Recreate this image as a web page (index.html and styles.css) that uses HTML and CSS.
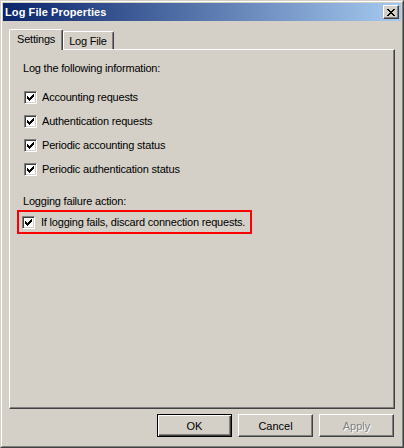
FILE: index.html
```html
<!DOCTYPE html>
<html>
<head>
<meta charset="utf-8">
<link rel="stylesheet" href="styles.css">
</head>
<body>
<div class="window">
  <div class="frame">
    <div class="titlebar">
      <span class="title">Log File Properties</span>
      <button class="close" aria-label="Close">
        <svg width="8" height="7" viewBox="0 0 8 7" shape-rendering="crispEdges">
          <path d="M0 0h2v1h-2zM6 0h2v1h-2zM1 1h2v1h-2zM5 1h2v1h-2zM2 2h4v1h-4zM3 3h2v1h-2zM2 4h4v1h-4zM1 5h2v1h-2zM5 5h2v1h-2zM0 6h2v1h-2zM6 6h2v1h-2z" fill="#000"/>
        </svg>
      </button>
    </div>
    <div class="content">
      <div class="tabs">
        <div class="tab active">Settings</div>
        <div class="tab">Log File</div>
      </div>
      <div class="panel">
        <div class="heading">Log the following information:</div>
        <div class="list">
          <div class="row"><span class="cb"><svg width="7" height="7" viewBox="0 0 7 7" shape-rendering="crispEdges"><path d="M6 0h1v3h-1v1h-1v1h-1v1h-1v1h-1v-1h-1v-1h-1v-3h1v1h1v1h1v-1h1v-1h1z" fill="#000"/></svg></span><span class="lbl">Accounting requests</span></div>
          <div class="row"><span class="cb"><svg width="7" height="7" viewBox="0 0 7 7" shape-rendering="crispEdges"><path d="M6 0h1v3h-1v1h-1v1h-1v1h-1v1h-1v-1h-1v-1h-1v-3h1v1h1v1h1v-1h1v-1h1z" fill="#000"/></svg></span><span class="lbl">Authentication requests</span></div>
          <div class="row"><span class="cb"><svg width="7" height="7" viewBox="0 0 7 7" shape-rendering="crispEdges"><path d="M6 0h1v3h-1v1h-1v1h-1v1h-1v1h-1v-1h-1v-1h-1v-3h1v1h1v1h1v-1h1v-1h1z" fill="#000"/></svg></span><span class="lbl">Periodic accounting status</span></div>
          <div class="row"><span class="cb"><svg width="7" height="7" viewBox="0 0 7 7" shape-rendering="crispEdges"><path d="M6 0h1v3h-1v1h-1v1h-1v1h-1v1h-1v-1h-1v-1h-1v-3h1v1h1v1h1v-1h1v-1h1z" fill="#000"/></svg></span><span class="lbl">Periodic authentication status</span></div>
        </div>
        <div class="heading heading2">Logging failure action:</div>
        <div class="highlight">
          <span class="cb"><svg width="7" height="7" viewBox="0 0 7 7" shape-rendering="crispEdges"><path d="M6 0h1v3h-1v1h-1v1h-1v1h-1v1h-1v-1h-1v-1h-1v-3h1v1h1v1h1v-1h1v-1h1z" fill="#000"/></svg></span><span class="lbl">If logging fails, discard connection requests.</span>
        </div>
      </div>
      <div class="buttons">
        <button class="btn default">OK</button>
        <button class="btn">Cancel</button>
        <button class="btn disabled">Apply</button>
      </div>
    </div>
  </div>
</div>
</body>
</html>
```

FILE: styles.css
```css
* { box-sizing: border-box; }
html, body { margin: 0; padding: 0; }
body {
  font-family: "Liberation Sans", Arial, sans-serif;
  font-size: 11px;
  color: #000;
  background: #D4D0C8;
}
.window {
  width: 404px;
  height: 448px;
  border: 1px solid;
  border-color: #D4D0C8 #404040 #404040 #D4D0C8;
  background: #D4D0C8;
}
.frame {
  height: 100%;
  border: 1px solid;
  border-color: #FFFFFF #808080 #808080 #FFFFFF;
  padding: 1px;
  display: flex;
  flex-direction: column;
}
.titlebar {
  height: 18px;
  background: linear-gradient(to right, #0A246A, #A6CAF0);
  display: flex;
  align-items: center;
  justify-content: space-between;
  padding: 0 2px 0 2px;
}
.title {
  color: #fff;
  font-weight: bold;
  font-size: 11px;
  letter-spacing: 0.1px;
  white-space: nowrap;
}
.close {
  width: 16px;
  height: 14px;
  padding: 0;
  margin: 0;
  background: #D4D0C8;
  border: 1px solid;
  border-color: #FFFFFF #404040 #404040 #FFFFFF;
  box-shadow: inset -1px -1px #808080;
  display: flex;
  align-items: center;
  justify-content: center;
}
.close svg { display: block; margin-left: -1px; }
.content {
  flex: 1;
  padding: 8px 6px 0 6px;
  display: flex;
  flex-direction: column;
}
.tabs {
  display: flex;
  align-items: flex-end;
  height: 20px;
  position: relative;
  z-index: 1;
}
.tab {
  height: 18px;
  padding: 0 6px 0 5px;
  border: 1px solid;
  border-bottom: none;
  border-color: #FFFFFF #404040 #404040 #FFFFFF;
  box-shadow: inset -1px 0 #808080;
  border-radius: 2px 2px 0 0;
  display: flex;
  align-items: center;
  background: #D4D0C8;
  letter-spacing: -0.2px;
  white-space: nowrap;
}
.tab.active {
  height: 21px;
  margin-bottom: -1px;
  padding: 0 7px 0 7px;
  align-items: flex-start;
  padding-top: 3px;
}
.panel {
  height: 360px;
  border: 1px solid;
  border-color: #FFFFFF #404040 #404040 #FFFFFF;
  box-shadow: inset -1px -1px #808080;
  padding: 12px 0 0 7px;
  display: flex;
  flex-direction: column;
  align-items: flex-start;
  letter-spacing: -0.2px;
  white-space: nowrap;
}
.heading {
  line-height: 13px;
  margin-left: 6px;
}
.list {
  margin-top: 10px;
  margin-left: 7px;
}
.row {
  height: 24px;
  display: flex;
  align-items: center;
}
.cb {
  width: 13px;
  height: 13px;
  background: #fff;
  border: 1px solid;
  border-color: #808080 #FFFFFF #FFFFFF #808080;
  box-shadow: inset 1px 1px #404040, inset -1px -1px #D4D0C8;
  display: flex;
  align-items: center;
  justify-content: center;
  flex: none;
}
.cb svg { display: block; }
.lbl {
  margin-left: 5px;
  line-height: 13px;
}
.heading2 { margin-top: 14px; }
.highlight {
  margin-top: 2px;
  width: 235px;
  height: 24px;
  border: 2px solid #FF0000;
  display: flex;
  align-items: center;
  padding-left: 3px;
}
.highlight .lbl { margin-left: 6px; }
.buttons {
  margin-top: 5px;
  display: flex;
  justify-content: flex-end;
  gap: 6px;
  padding-right: 1px;
}
.btn {
  width: 75px;
  height: 23px;
  font-family: "Liberation Sans", Arial, sans-serif;
  font-size: 11px;
  background: #D4D0C8;
  color: #000;
  border: 1px solid;
  border-color: #FFFFFF #404040 #404040 #FFFFFF;
  box-shadow: inset -1px -1px #808080;
  padding: 0;
  margin: 0;
}
.btn.default {
  border: 1px solid #000;
  box-shadow: inset 1px 1px #FFFFFF, inset -1px -1px #404040, inset -2px -2px #808080;
}
.btn.disabled {
  color: #808080;
  text-shadow: 1px 1px #FFFFFF;
}
```
